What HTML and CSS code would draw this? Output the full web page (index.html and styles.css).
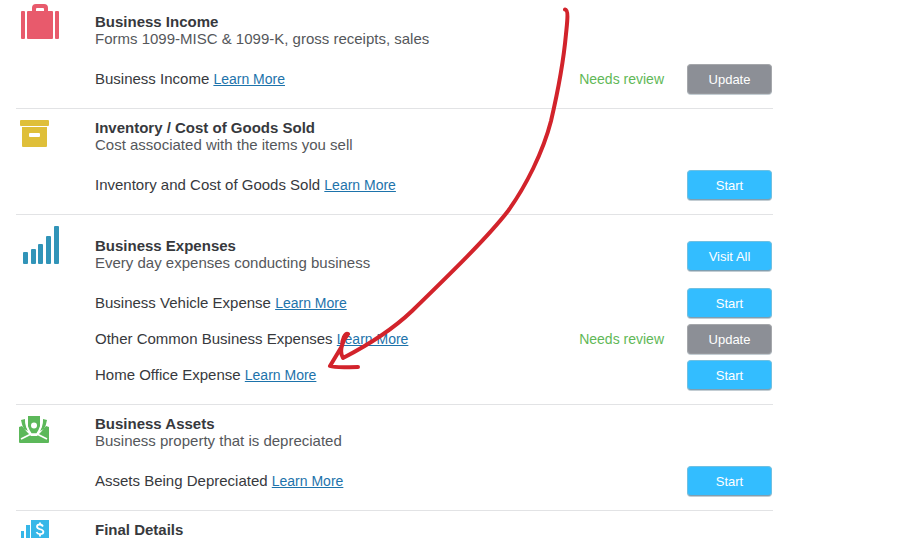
FILE: index.html
```html
<!DOCTYPE html>
<html lang="en">
<head>
<meta charset="utf-8">
<meta name="viewport" content="width=device-width, initial-scale=1">
<title>Business Summary</title>
<link rel="stylesheet" href="styles.css">
</head>
<body>
<main class="summary">
  <section class="topic">
    <svg class="icon" viewBox="0 0 44 52" fill="#e85a6c" aria-hidden="true">
      <rect x="4" y="8" width="4" height="28" rx="1"/>
      <rect x="38" y="8" width="4" height="28" rx="1"/>
      <path d="M10 9q0-1 1-1h4V5q0-4 4-4h8q4 0 4 4v3h4q1 0 1 1v26q0 1-1 1H11q-1 0-1-1zM19 8h8V6q0-1-1-1h-6q-1 0-1 1z"/>
    </svg>
    <div class="content">
      <header class="heading">
        <div>
          <h2 class="title">Business Income</h2>
          <p class="description">Forms 1099-MISC &amp; 1099-K, gross receipts, sales</p>
        </div>
      </header>
      <div class="row">
        <p class="label">Business Income <a class="link" href="#">Learn More</a></p>
        <span class="status">Needs review</span>
        <button class="button button-muted" type="button">Update</button>
      </div>
    </div>
  </section>

  <section class="topic">
    <svg class="icon" viewBox="0 0 44 52" fill="#dfbf39" aria-hidden="true">
      <rect x="3" y="11" width="29" height="6" rx="1"/>
      <path fill-rule="evenodd" d="M5 18h25v19q0 1-1 1H6q-1 0-1-1zM13 24q-1 0-1 1v2q0 1 1 1h9q1 0 1-1v-2q0-1-1-1z"/>
    </svg>
    <div class="content">
      <header class="heading">
        <div>
          <h2 class="title">Inventory / Cost of Goods Sold</h2>
          <p class="description">Cost associated with the items you sell</p>
        </div>
      </header>
      <div class="row">
        <p class="label">Inventory and Cost of Goods Sold <a class="link" href="#">Learn More</a></p>
        <button class="button" type="button">Start</button>
      </div>
    </div>
  </section>

  <section class="topic topic-group">
    <svg class="icon" viewBox="0 0 44 52" fill="#3194b8" aria-hidden="true">
      <rect x="6" y="37" width="5" height="12" rx="1"/>
      <rect x="14" y="34" width="5" height="15" rx="1"/>
      <rect x="21" y="29" width="5" height="20" rx="1"/>
      <rect x="29" y="21" width="5" height="28" rx="1"/>
      <rect x="37" y="11" width="5" height="38" rx="1"/>
    </svg>
    <div class="content">
      <header class="heading">
        <div>
          <h2 class="title">Business Expenses</h2>
          <p class="description">Every day expenses conducting business</p>
        </div>
        <button class="button" type="button">Visit All</button>
      </header>
      <div class="row">
        <p class="label">Business Vehicle Expense <a class="link" href="#">Learn More</a></p>
        <button class="button" type="button">Start</button>
      </div>
      <div class="row">
        <p class="label">Other Common Business Expenses <a class="link" href="#">Learn More</a></p>
        <span class="status">Needs review</span>
        <button class="button button-muted" type="button">Update</button>
      </div>
      <div class="row">
        <p class="label">Home Office Expense <a class="link" href="#">Learn More</a></p>
        <button class="button" type="button">Start</button>
      </div>
    </div>
  </section>

  <section class="topic">
    <svg class="icon" viewBox="0 0 44 52" fill="#5cb85a" aria-hidden="true">
      <path d="M2 22l3-1 5 6 4 4h6l4-4 5-6 3 1v15q0 1-1 1H3q-1 0-1-1z"/>
      <path d="M4 15l4-1q0 7 3 12l-4-2q-2-3-3-9zM30 15l-4-1q0 7-3 12l4-2q2-3 3-9z"/>
      <path d="M11 11h12v13l-3 5h-6l-3-5z"/>
      <path d="M9 14q0 8 5 15h6q5-7 5-15M4 34l10-5M30 34l-10-5" fill="none" stroke="#fff" stroke-width="1.7"/>
      <circle cx="17" cy="20.500" r="3" fill="#fff"/>
    </svg>
    <div class="content">
      <header class="heading">
        <div>
          <h2 class="title">Business Assets</h2>
          <p class="description">Business property that is depreciated</p>
        </div>
      </header>
      <div class="row">
        <p class="label">Assets Being Depreciated <a class="link" href="#">Learn More</a></p>
        <button class="button" type="button">Start</button>
      </div>
    </div>
  </section>

  <section class="topic">
    <svg class="icon" viewBox="0 0 44 52" fill="#36b7e8" aria-hidden="true">
      <rect x="4" y="20" width="3" height="18"/>
      <rect x="9" y="14" width="4" height="24"/>
      <rect x="14" y="9" width="18" height="29"/>
      <path d="M26 15.500q-1-2-3-2-3 0-3 2.300c0 3.200 6.400 1.700 6.400 5q0 2.400-3.400 2.400-2.500 0-3.500-2M23 11.500v2M23 23v2.500" fill="none" stroke="#fff" stroke-width="1.800"/>
    </svg>
    <div class="content">
      <header class="heading">
        <h2 class="title">Final Details</h2>
      </header>
    </div>
  </section>
</main>

<svg class="annotation" width="600" height="380" viewBox="0 0 600 380" aria-hidden="true">
  <path d="M565 9.500C569 10 567 24 566 34C563 67 558 91 551 121C543 152 526 186 508 211C488 237 450 274 412 311C392 330 370 344 343 358C339 352 342 341 348 334C345 332 342 340 342 346L330 366C335 368 347 367 358 367"/>
</svg>
</body>
</html>
```

FILE: styles.css
```css
* {
  box-sizing: border-box;
}

body {
  position: relative;
  height: 100vh;
  margin: 0;
  padding: 3px 16px 0;
  overflow: hidden;
  background: #fff;
  color: #37393d;
  font-family: "Liberation Sans", Arial, sans-serif;
  font-size: 15px;
  line-height: 17px;
}

.summary {
  max-width: 757px;
}

.topic {
  display: grid;
  grid-template-columns: 79px 1fr;
  border-bottom: 1px solid #e2e3e5;
}

.icon {
  width: 44px;
  height: 52px;
  margin-left: 1px;
}

.content {
  padding: 10px 1px 11px 0;
}

.topic-group .content {
  padding-top: 22px;
}

.heading {
  display: flex;
  align-items: flex-end;
  justify-content: space-between;
  margin-bottom: 14px;
}

.title,
.description,
.label {
  margin: 0;
}

.title {
  font-size: 15px;
  line-height: 18px;
}

.description {
  line-height: 16px;
  color: #55575b;
}

.row {
  display: flex;
  align-items: center;
  height: 36px;
}

.label {
  flex: 1;
}

.link {
  color: #1d73ab;
  font-size: 14px;
}

.status {
  margin-right: 23px;
  color: #5fb857;
  font-size: 14px;
}

.button {
  width: 85px;
  height: 30px;
  padding: 0;
  border: 1px solid #6fc0e2;
  border-bottom-color: #7e9fb2;
  border-radius: 4px;
  background: #33bdff;
  box-shadow: 0 1px 0 #c3cdd3;
  color: #fff;
  font-family: inherit;
  font-size: 13px;
  cursor: pointer;
}

.button-muted {
  border-color: #a5a7ab;
  border-bottom-color: #97999e;
  background: #8c8f96;
}

.annotation {
  position: absolute;
  top: 0;
  left: 0;
  pointer-events: none;
}

.annotation path {
  fill: none;
  stroke: #d2232b;
  stroke-width: 4;
  stroke-linecap: round;
  stroke-linejoin: round;
}
```
